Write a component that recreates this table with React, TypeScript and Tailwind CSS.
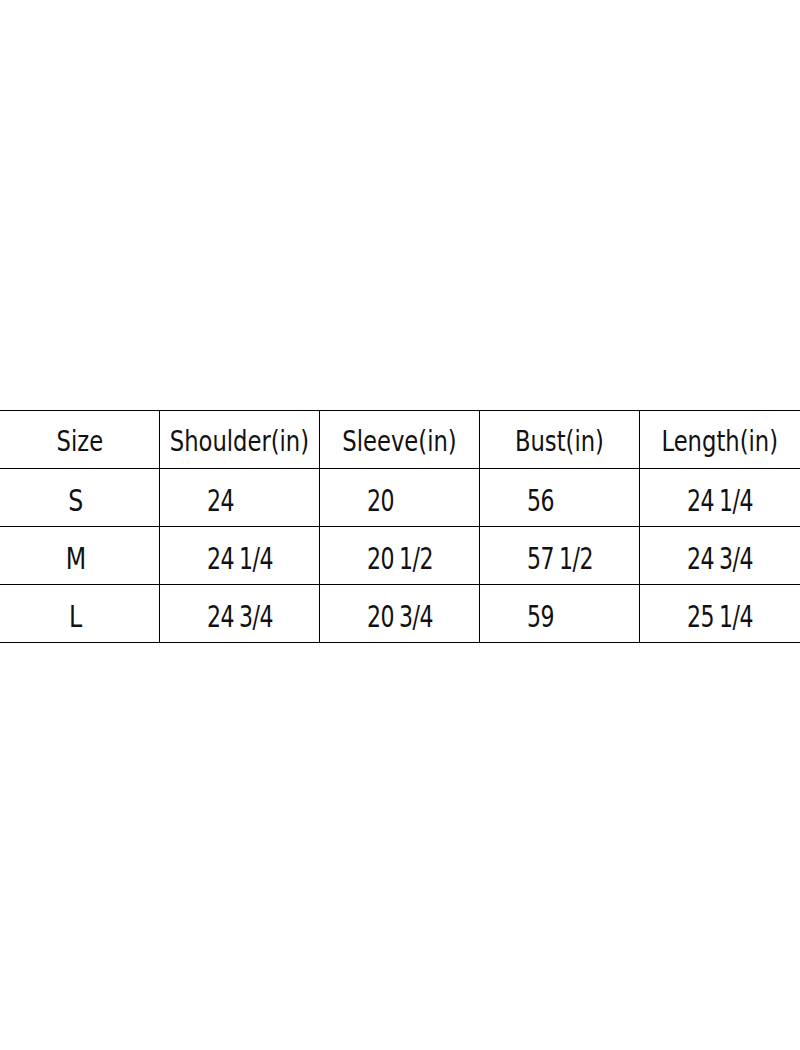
import React from 'react'

const headers = ['Size', 'Shoulder(in)', 'Sleeve(in)', 'Bust(in)', 'Length(in)']

const rows = [
  ['S', '24', '20', '56', '24 1/4'],
  ['M', '24 1/4', '20 1/2', '57 1/2', '24 3/4'],
  ['L', '24 3/4', '20 3/4', '59', '25 1/4'],
]

export default function App() {
  return (
    <div
      className="w-[800px] h-[1050px] bg-white text-[#111] pt-[410px]"
      style={{ fontFamily: '"DejaVu Sans Condensed", "Liberation Sans", sans-serif' }}
    >
      <div className="border-t border-black">
        {/* Header */}
        <div className="grid grid-cols-5 h-[58px] border-b border-black">
          {headers.map((h, i) => (
            <div
              key={h}
              className={`flex items-center justify-center pt-[4px] text-[28px] ${i < 4 ? 'border-r border-black' : ''}`}
            >
              <span className="inline-block scale-x-[0.9] origin-center whitespace-nowrap">{h}</span>
            </div>
          ))}
        </div>

        {/* Rows */}
        {rows.map(row => (
          <div key={row[0]} className="grid grid-cols-5 h-[58px] border-b border-black">
            {row.map((cell, i) => (
              <div
                key={i}
                className={`flex items-center pt-[6px] text-[31px] ${i === 0 ? 'justify-center pr-[8px]' : 'pl-[47px]'} ${i < 4 ? 'border-r border-black' : ''}`}
              >
                <span
                  className={`inline-block whitespace-nowrap tracking-[-0.6px] [word-spacing:-2px] ${i === 0 ? 'scale-x-[0.85] origin-center' : 'scale-x-[0.79] origin-left'}`}
                >
                  {cell}
                </span>
              </div>
            ))}
          </div>
        ))}
      </div>
    </div>
  )
}
